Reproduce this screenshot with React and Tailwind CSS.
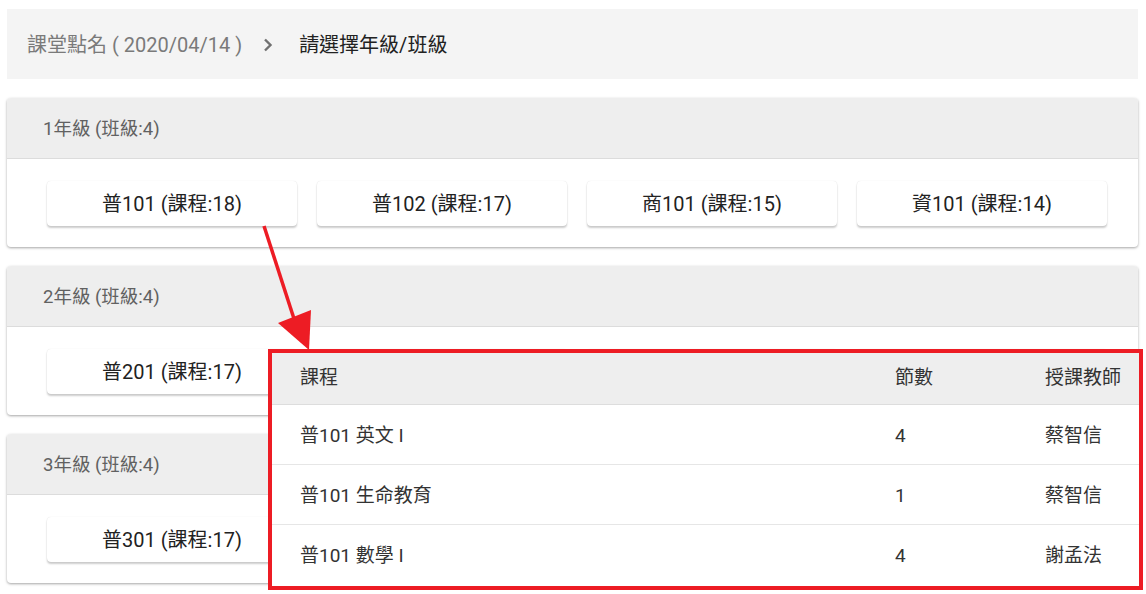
import React from "react";

const font = { fontFamily: '"Roboto", "Noto Sans CJK TC", sans-serif' };

const grades = [
  { title: "1年級 (班級:4)", classes: ["普101 (課程:18)", "普102 (課程:17)", "商101 (課程:15)", "資101 (課程:14)"] },
  { title: "2年級 (班級:4)", classes: ["普201 (課程:17)", "普202 (課程:17)", "商201 (課程:15)", "資201 (課程:14)"] },
  { title: "3年級 (班級:4)", classes: ["普301 (課程:17)", "普302 (課程:17)", "商301 (課程:15)", "資301 (課程:14)"] },
];

const rows = [
  ["普101 英文 I", "4", "蔡智信"],
  ["普101 生命教育", "1", "蔡智信"],
  ["普101 數學 I", "4", "謝孟法"],
];

function Card({ g }) {
  return (
    <div className="rounded-[4px] bg-white shadow-[0_1px_3px_rgba(0,0,0,0.25),0_1px_2px_rgba(0,0,0,0.12)] overflow-hidden">
      <div className="h-[61px] bg-[#eeeeee] border-b border-[#dcdcdc] flex items-center pl-[36px] pt-[3px] text-[18.5px] text-[#616161]">
        {g.title}
      </div>
      <div className="flex gap-[20px] pl-[40px] pt-[22px] pb-[21px]">
        {g.classes.map((c) => (
          <div
            key={c}
            className="w-[250px] h-[45px] shrink-0 rounded-[4px] bg-white shadow-[0_2px_2px_rgba(0,0,0,0.2),0_0_1px_rgba(0,0,0,0.15)] flex items-center justify-center text-[20px] text-[#222222]"
          >
            {c}
          </div>
        ))}
      </div>
    </div>
  );
}

export default function App() {
  return (
    <div className="relative w-[1146px] h-[594px] bg-white overflow-hidden" style={font}>
      <div className="flex flex-col gap-[19px] pl-[7px] pr-[8px] pt-[9px]">
        <div className="h-[70px] bg-[#f4f4f4] flex items-center pl-[20px] pt-[2px] text-[20px]">
          <span className="text-[#7a7a7a]">課堂點名 ( 2020/04/14 )</span>
          <svg className="ml-[21px] mr-[26px] shrink-0" width="10" height="14" viewBox="0 0 10 14">
            <path d="M2 1.5 L7.5 7 L2 12.5" fill="none" stroke="#707070" strokeWidth="2.4" />
          </svg>
          <span className="text-[#222222]">請選擇年級/班級</span>
        </div>
        {grades.map((g) => (
          <Card key={g.title} g={g} />
        ))}
      </div>

      {/* arrow */}
      <svg className="absolute left-0 top-0 pointer-events-none" width="1146" height="594">
        <line x1="264" y1="226" x2="297" y2="328" stroke="#ed1c24" strokeWidth="3.5" />
        <polygon points="278,323 311,310 309,350" fill="#ed1c24" />
      </svg>

      {/* table overlay */}
      <div className="absolute left-[268px] top-[349px] w-[875px] h-[241px] border-[4px] border-[#ed1c24] bg-white text-[19px] text-[#333333]">
        <div className="h-[52px] bg-[#eeeeee] border-b border-[#dddddd] flex items-center">
          <div className="pl-[28px] w-[623px] shrink-0">課程</div>
          <div className="w-[150px] shrink-0">節數</div>
          <div className="shrink-0">授課教師</div>
        </div>
        {rows.map((r, i) => (
          <div key={i} className={"h-[60px] flex items-center pt-[3px] " + (i < rows.length - 1 ? "border-b border-[#e6e6e6]" : "")}>
            <div className="pl-[28px] w-[623px] shrink-0">{r[0]}</div>
            <div className="w-[150px] shrink-0">{r[1]}</div>
            <div className="shrink-0">{r[2]}</div>
          </div>
        ))}
      </div>
    </div>
  );
}
